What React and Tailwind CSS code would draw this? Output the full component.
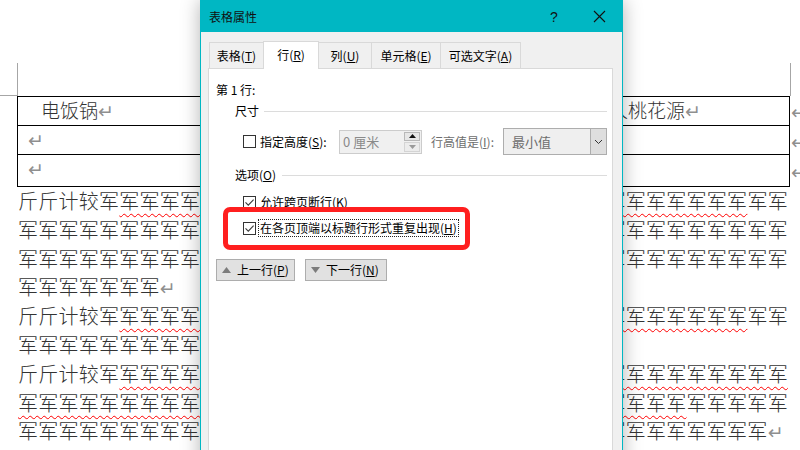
import React from "react";

function Ret() {
  return (
    <span className="text-[19px] font-normal tracking-normal text-[#8f8f8f] font-['DejaVu_Sans',sans-serif]">↵</span>
  );
}

const J = "军";
const LINES = [
  { t: "斤斤计较" + J.repeat(34), u: [5, 35] },
  { t: J.repeat(38) },
  { t: J.repeat(38) },
  { t: J.repeat(7), ret: true },
  { t: "斤斤计较" + J.repeat(34), u: [5, 35] },
  { t: J.repeat(25) },
  { t: "斤斤计较" + J.repeat(34), u: [5, 37] },
  { t: J.repeat(38), u: [0, 32] },
  { t: J.repeat(37), ret: true },
];

function Document() {
  return (
    <div className="pt-[63px] text-[#333333] font-light">
      <div className="flex h-[33px]">
        <div className="w-[18px] shrink-0 border-r border-b border-[#a6a6a6]" />
        <div className="w-[773px] shrink-0 border-r border-[#a6a6a6]" />
      </div>
      <div className="flex">
        <div className="w-[17px] shrink-0" />
        <div className="w-[773px] shrink-0 border border-black">
          <div className="h-[29px] border-b border-black flex items-center text-[19px] whitespace-nowrap">
            <span className="w-[591px] shrink-0 pl-[23px]">
              电饭锅<Ret />
            </span>
            <span>
              人桃花源<Ret />
            </span>
          </div>
          <div className="h-[29px] border-b border-black flex items-center pl-[10px]">
            <Ret />
          </div>
          <div className="h-[29px] flex items-center pl-[10px]">
            <Ret />
          </div>
        </div>
        <div className="flex flex-col pt-[1px] pl-[1px]">
          <div className="h-[30px] flex items-center"><Ret /></div>
          <div className="h-[30px] flex items-center"><Ret /></div>
          <div className="h-[30px] flex items-center"><Ret /></div>
        </div>
      </div>
      <div>
        {LINES.map((l, i) => {
          const c = [...l.t];
          let content = l.t;
          if (l.u) {
            const [a, b] = l.u;
            content = (
              <>
                {c.slice(0, a).join("")}
                <span className="underline decoration-wavy decoration-[#ff0000] decoration-1 underline-offset-[4px]">
                  {c.slice(a, b + 1).join("")}
                </span>
                {c.slice(b + 1).join("")}
              </>
            );
          }
          return (
            <div
              key={i}
              className="h-[28.8px] leading-[28.8px] whitespace-nowrap pl-[18px] text-[20px] tracking-[0.26px]"
            >
              {content}
              {l.ret && <Ret />}
            </div>
          );
        })}
      </div>
    </div>
  );
}

function Check({ checked }) {
  return (
    <span className="w-[13px] h-[13px] shrink-0 border border-[#333333] bg-white flex items-center justify-center">
      {checked && (
        <svg width="11" height="11" viewBox="0 0 11 11">
          <path d="M1.5 5.3 L4.3 8.2 L9.6 2.6" stroke="#3a3a3a" strokeWidth="1.1" fill="none" />
        </svg>
      )}
    </span>
  );
}

function Section({ children, gap }) {
  return (
    <div className="flex items-center h-[16px] pl-[26px] pr-[5px]">
      <span>{children}</span>
      <div className={gap + " flex-1 border-t border-[#dcdcdc]"} />
    </div>
  );
}

function Dialog() {
  return (
    <div className="absolute left-[200px] top-0 w-[423px] h-[470px] border border-[#00b7c3] bg-[#f0f0f0] shadow-[0_0_18px_rgba(0,0,0,0.3)] text-[12px] leading-[16px] text-black font-['Noto_Sans_CJK_SC',sans-serif]">
      {/* title bar */}
      <div className="h-[31px] bg-[#00b7c3] flex items-center pl-[8px]">
        <span className="text-[12px] text-[#111]">表格属性</span>
        <span className="ml-auto w-[30px] text-center text-[14px] font-['Liberation_Sans',sans-serif] text-[#111]">?</span>
        <span className="w-[7px]" />
        <span className="w-[46px] flex items-center justify-center">
          <svg width="13" height="13" viewBox="0 0 13 13">
            <path d="M1 1 L12 12 M12 1 L1 12" stroke="#111" strokeWidth="1.1" fill="none" />
          </svg>
        </span>
      </div>

      {/* tabs */}
      <div className="relative z-10 mt-[9px] h-[28px] pl-[8px] flex items-end">
        <div className="w-[54px] h-[26px] mb-[1px] border-t border-l border-[#d9d9d9] bg-[#f0f0f0] flex items-center justify-center">
          表格(<u>T</u>)
        </div>
        <div className="w-[56px] h-[28px] border-t border-l border-r border-[#d9d9d9] bg-white flex items-center justify-center pb-[1px]">
          行(<u>R</u>)
        </div>
        <div className="w-[53px] h-[26px] mb-[1px] border-t border-r border-[#d9d9d9] bg-[#f0f0f0] flex items-center justify-center">
          列(<u>U</u>)
        </div>
        <div className="w-[69px] h-[26px] mb-[1px] border-t border-r border-[#d9d9d9] bg-[#f0f0f0] flex items-center justify-center">
          单元格(<u>E</u>)
        </div>
        <div className="w-[80px] h-[26px] mb-[1px] border-t border-r border-[#d9d9d9] bg-[#f0f0f0] flex items-center justify-center">
          可选文字(<u>A</u>)
        </div>
      </div>

      {/* panel */}
      <div className="relative -mt-[1px] ml-[7px] w-[405px] h-[400px] border border-[#d9d9d9] bg-white flex flex-col">
        <div className="mt-[13px] h-[16px] pl-[7px]">第 1 行:</div>

        <div className="mt-[5px]">
          <Section gap="ml-[5px]">尺寸</Section>
        </div>

        <div className="mt-[9px] h-[27px] pl-[34px] flex items-center whitespace-nowrap">
          <Check />
          <span className="ml-[4px] w-[79px]">
            指定高度(<u>S</u>):
          </span>
          <div className="w-[83px] h-[24px] border border-[#cccccc] bg-[#f0f0f0] flex items-center">
            <span className="flex-1 pl-[3px] text-[13px] text-[#8a8a8a]">0 厘米</span>
            <div className="w-[17px] h-[22px] flex flex-col gap-[1px] pr-[1px] py-[1px]">
              <div className="flex-1 border border-[#b8b8b8] bg-[#e6e6e6] flex items-center justify-center">
                <svg width="7" height="4" viewBox="0 0 7 4"><path d="M0 4 L3.5 0 L7 4 Z" fill="#111" /></svg>
              </div>
              <div className="flex-1 border border-[#d4d4d4] bg-[#ececec] flex items-center justify-center">
                <svg width="7" height="4" viewBox="0 0 7 4"><path d="M0 0 L3.5 4 L7 0 Z" fill="#9a9a9a" /></svg>
              </div>
            </div>
          </div>
          <span className="ml-[9px] w-[72px] text-[#6d6d6d]">
            行高值是(<u>I</u>):
          </span>
          <div className="w-[104px] h-[27px] border border-[#adadad] bg-[#efefef] flex items-stretch">
            <span className="flex-1 pl-[8px] flex items-center text-[13px] text-[#6d6d6d]">最小值</span>
            <span className="w-[16px] border-l border-[#adadad] bg-[#dedede] flex items-center justify-center">
              <svg width="9" height="6" viewBox="0 0 9 6">
                <path d="M1 1 L4.5 4.5 L8 1" stroke="#333" strokeWidth="1" fill="none" />
              </svg>
            </span>
          </div>
        </div>

        <div className="mt-[12px]">
          <Section gap="ml-[6px]">
            选项(<u>O</u>)
          </Section>
        </div>

        <div className="mt-[11px] h-[16px] pl-[34px] flex items-center gap-[4px]">
          <Check checked />
          <span>
            允许跨页断行(<u>K</u>)
          </span>
        </div>

        <div className="mt-[9px] h-[18px] pl-[34px] flex items-center gap-[2px]">
          <Check checked />
          <span className="h-[18px] px-[1px] border border-dotted border-[#222] flex items-center">
            在各页顶端以标题行形式重复出现(<u>H</u>)
          </span>
        </div>

        <div className="mt-[22px] pl-[7px] flex gap-[10px]">
          <div className="w-[79px] h-[22px] border border-[#adadad] bg-[#e1e1e1] flex items-center pl-[5px] gap-[6px]">
            <svg width="9" height="6" viewBox="0 0 9 6"><path d="M0 6 L4.5 0 L9 6 Z" fill="#7c7c7c" /></svg>
            <span>
              上一行(<u>P</u>)
            </span>
          </div>
          <div className="w-[82px] h-[22px] border border-[#adadad] bg-[#e1e1e1] flex items-center pl-[5px] gap-[6px]">
            <svg width="9" height="6" viewBox="0 0 9 6"><path d="M0 0 L4.5 6 L9 0 Z" fill="#7c7c7c" /></svg>
            <span>
              下一行(<u>N</u>)
            </span>
          </div>
        </div>

        {/* red annotation box */}
        <div className="absolute left-[14px] top-[138px] w-[247px] h-[43px] border-[5px] border-[#ff1f1f] rounded-[7px]" />
      </div>
    </div>
  );
}

export default function App() {
  return (
    <div className="relative w-[800px] h-[450px] overflow-hidden bg-white font-['Noto_Sans_CJK_SC',sans-serif]">
      <Document />
      <Dialog />
    </div>
  );
}
